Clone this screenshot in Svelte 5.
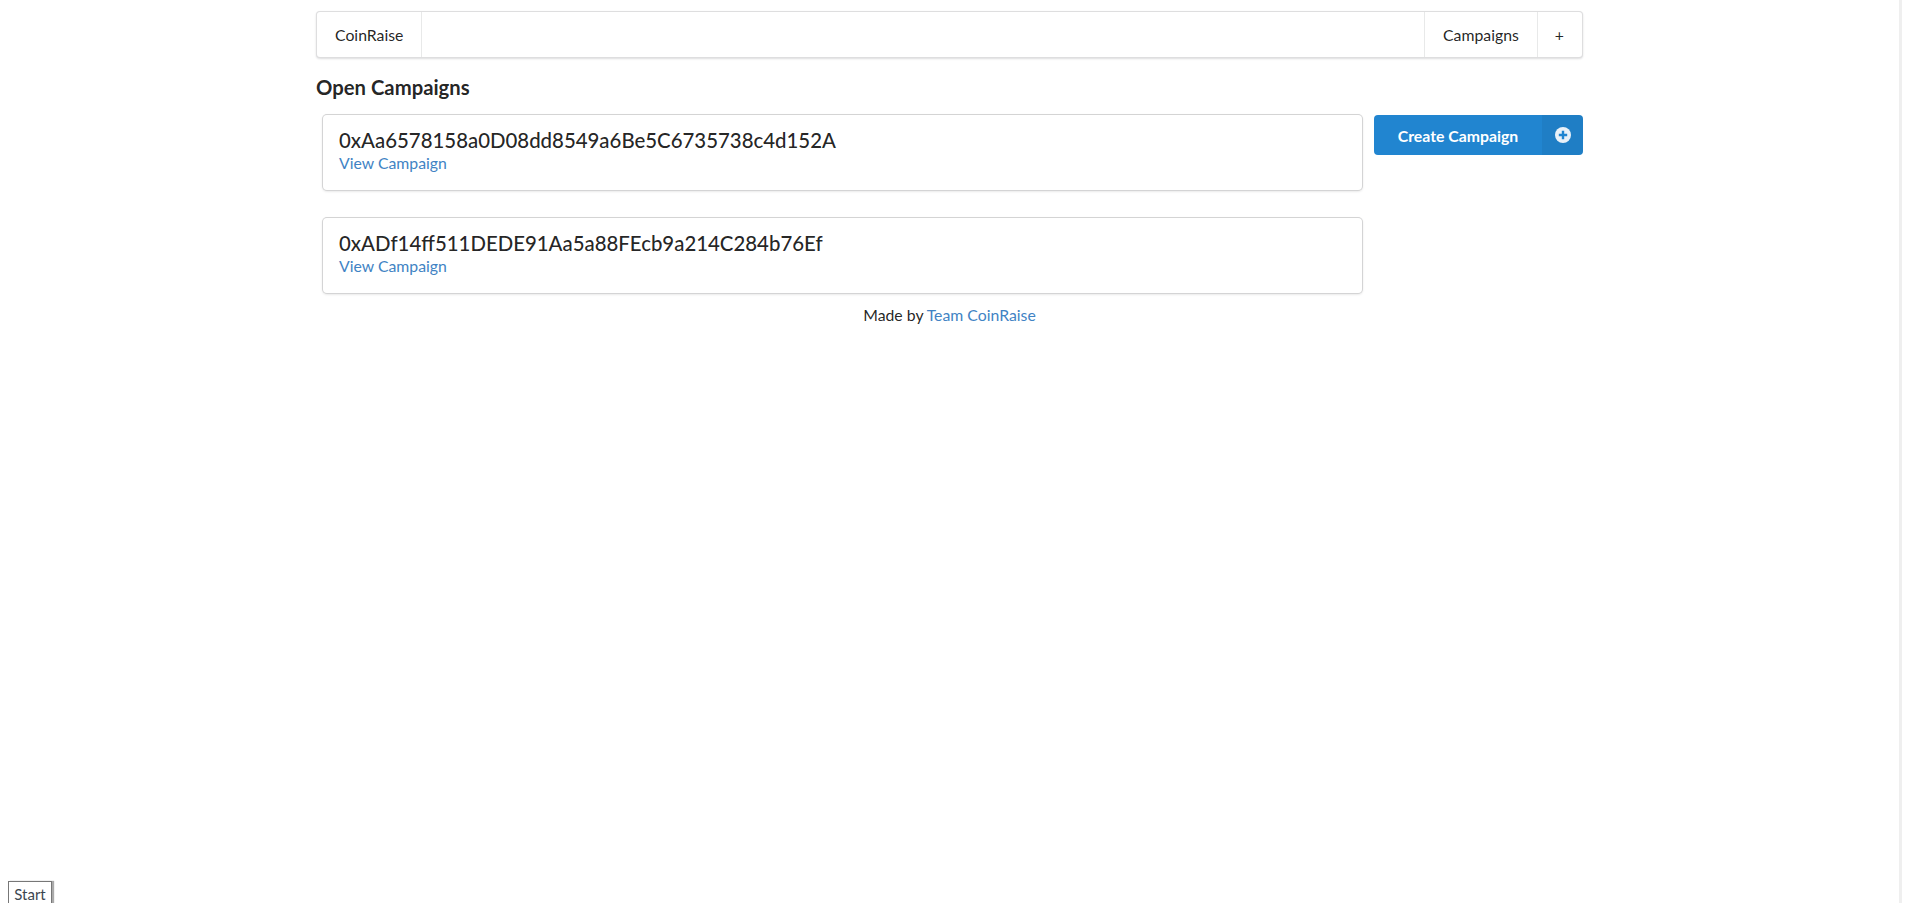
<script>
  const campaigns = [
    '0xAa6578158a0D08dd8549a6Be5C6735738c4d152A',
    '0xADf14ff511DEDE91Aa5a88FEcb9a214C284b76Ef'
  ];
</script>

<div class="page">
  <div class="container">
    <nav class="menu">
      <a class="item" href="#/">CoinRaise</a>
      <div class="right">
        <a class="item left-line" href="#/">Campaigns</a>
        <a class="item left-line plus" href="#/">+</a>
      </div>
    </nav>
    <h3 class="title">Open Campaigns</h3>
    <div class="content">
      <div class="cards">
        {#each campaigns as address}
          <div class="card">
            <div class="address">{address}</div>
            <a class="link" href="#/">View Campaign</a>
          </div>
        {/each}
      </div>
      <button class="create">
        <span class="label">Create Campaign</span>
        <span class="icon">
          <svg width="16" height="16" viewBox="0 0 16 16" aria-hidden="true">
            <circle cx="8" cy="8" r="8" fill="#e9f1f8" />
            <path d="M8 3.8v8.4M3.8 8h8.4" stroke="#2185d0" stroke-width="2.4" />
          </svg>
        </span>
      </button>
    </div>
    <div class="footer">Made by <a class="link" href="#/">Team CoinRaise</a></div>
  </div>
  <div class="start">Start</div>
</div>

<style>
  :global(body) {
    margin: 0;
    background: #fff;
    overflow: hidden;
  }
  .page {
    position: relative;
    box-sizing: border-box;
    width: 1902px;
    height: 903px;
    border-right: 3px solid #efefef;
    padding: 11px 0 0 316px;
    font-family: Lato, "Helvetica Neue", Arial, sans-serif;
    font-size: 15.8px;
    line-height: 20px;
    color: rgba(0, 0, 0, 0.87);
    overflow: hidden;
  }
  .container {
    width: 1267px;
  }
  a {
    text-decoration: none;
  }
  .menu {
    display: flex;
    justify-content: space-between;
    box-sizing: border-box;
    height: 47px;
    border: 1px solid rgba(34, 36, 38, 0.15);
    border-radius: 4px;
    box-shadow: 0 1px 2px 0 rgba(34, 36, 38, 0.15);
    background: #fff;
  }
  .right {
    display: flex;
  }
  .item {
    display: flex;
    align-items: center;
    padding: 0 18px;
    color: rgba(0, 0, 0, 0.87);
  }
  .plus {
    padding-left: 17px;
  }
  .menu > .item {
    border-right: 1px solid rgba(34, 36, 38, 0.1);
  }
  .left-line {
    border-left: 1px solid rgba(34, 36, 38, 0.1);
  }
  .title {
    margin: 15px 0 0;
    font-size: 20.3px;
    line-height: 28px;
    font-weight: 700;
    height: 28px;
  }
  .content {
    display: flex;
    align-items: flex-start;
    margin-top: 14px;
  }
  .cards {
    width: 1039px;
    margin-left: 7px;
    display: flex;
    flex-direction: column;
    gap: 28px;
  }
  .card {
    box-sizing: border-box;
    height: 75px;
    padding: 13px 16px;
    background: #fff;
    border-radius: 4px;
    box-shadow: 0 1px 3px 0 #d4d4d5, 0 0 0 1px #d4d4d5;
  }
  .address {
    font-size: 20.4px;
    line-height: 25px;
    font-weight: 500;
  }
  .link {
    color: #4183c4;
  }
  .create {
    display: flex;
    align-items: stretch;
    box-sizing: border-box;
    margin: 0 0 0 12px;
    padding: 0;
    width: 209px;
    height: 40px;
    border: 0;
    border-radius: 4px;
    overflow: hidden;
    background: #2185d0;
    color: #fff;
    font: 700 15.8px Lato, sans-serif;
  }
  .label {
    flex: 1;
    align-self: center;
    text-align: center;
    padding-top: 1px;
  }
  .icon {
    width: 41px;
    display: flex;
    align-items: center;
    justify-content: center;
    background: rgba(0, 0, 0, 0.05);
  }
  .footer {
    margin-top: 12px;
    text-align: center;
    width: 1267px;
  }
  .start {
    position: absolute;
    left: 8px;
    bottom: -4px;
    box-sizing: border-box;
    width: 44px;
    height: 26px;
    border: 1px solid #777;
    box-shadow: 2px 0 1px #aaa;
    background: #fff;
    text-align: center;
    color: #3c4650;
    font-size: 15px;
    line-height: 24px;
  }
</style>
